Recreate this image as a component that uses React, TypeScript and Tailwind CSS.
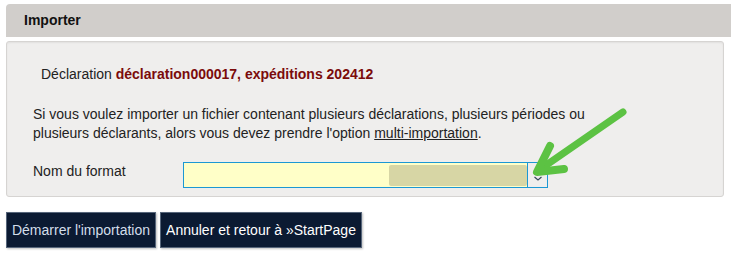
import React from "react";

export default function App() {
  return (
    <div className="relative w-[731px] h-[257px] bg-white overflow-hidden text-[14px] text-[#222]" style={{ fontFamily: '"Liberation Sans", Arial, sans-serif' }}>
      <div className="pt-[4px] pl-[6px]">
        <div className="h-[33px] bg-[#d1cecb] rounded-tl-[4px] flex items-center pl-[18px] font-bold text-[#111]">
          Importer
        </div>
        <div className="mt-[4px] mr-[7px] h-[156px] bg-[#efeeed] border border-[#d6d4d2] rounded-[3px] shadow-[inset_0_1px_2px_rgba(0,0,0,0.06)]">
          <div className="pt-[22px] pl-[34px] leading-[20px]">
            Déclaration <span className="font-bold text-[#7b0b0b]">déclaration000017, expéditions 202412</span>
          </div>
          <p className="mt-[21px] pl-[26px] leading-[19px]">
            Si vous voulez importer un fichier contenant plusieurs déclarations, plusieurs périodes ou
            <br />
            plusieurs déclarants, alors vous devez prendre l'option <a className="underline text-[#222]">multi-importation</a>.
          </p>
          <div className="mt-[19px] pl-[26px] flex items-start">
            <div className="w-[150px] pt-[1px] leading-[17px]">Nom du format</div>
            <div className="w-[365px] h-[26px] border border-[#1c98d4] bg-[#ffffc8] flex items-center">
              <div className="w-[205px] h-full" />
              <div className="w-[138px] h-[21px] bg-[#d7d6a5] rounded-[2px]" />
              <div className="w-px h-full bg-[#1c98d4]" />
              <div className="flex-1 h-full flex items-end justify-center pb-[5px] bg-[#efeeed]">
                <svg width="10" height="12" viewBox="0 0 10 12">
                  <polyline points="1.5,4.5 5,1.5 8.5,4.5" fill="none" stroke="#9aa4ad" strokeWidth="1" />
                  <polyline points="1.5,7 5,10 8.5,7" fill="none" stroke="#35485c" strokeWidth="1.2" />
                </svg>
              </div>
            </div>
          </div>
        </div>
        <div className="mt-[15px] flex gap-[4px]">
          <button className="h-[36px] w-[150px] bg-[#0b1a32] border border-[#56657a] text-[#d3deea] text-[14px] px-0 whitespace-nowrap flex items-center justify-center shadow-[1px_1px_2px_rgba(0,0,0,0.25)]">
            Démarrer l'importation
          </button>
          <button className="h-[36px] w-[202px] bg-[#0b1a32] border border-[#56657a] text-white text-[14px] px-0 whitespace-nowrap flex items-center justify-center shadow-[1px_1px_2px_rgba(0,0,0,0.25)]">
            Annuler et retour à »StartPage
          </button>
        </div>
      </div>
      <svg className="absolute left-0 top-0 pointer-events-none" width="731" height="257">
        <g stroke="#5cc243" strokeLinecap="round" strokeLinejoin="round" fill="none">
          <line x1="623" y1="112" x2="542" y2="168" strokeWidth="7" />
          <polyline points="550,146 537,172 564,169" strokeWidth="8" />
        </g>
      </svg>
    </div>
  );
}
